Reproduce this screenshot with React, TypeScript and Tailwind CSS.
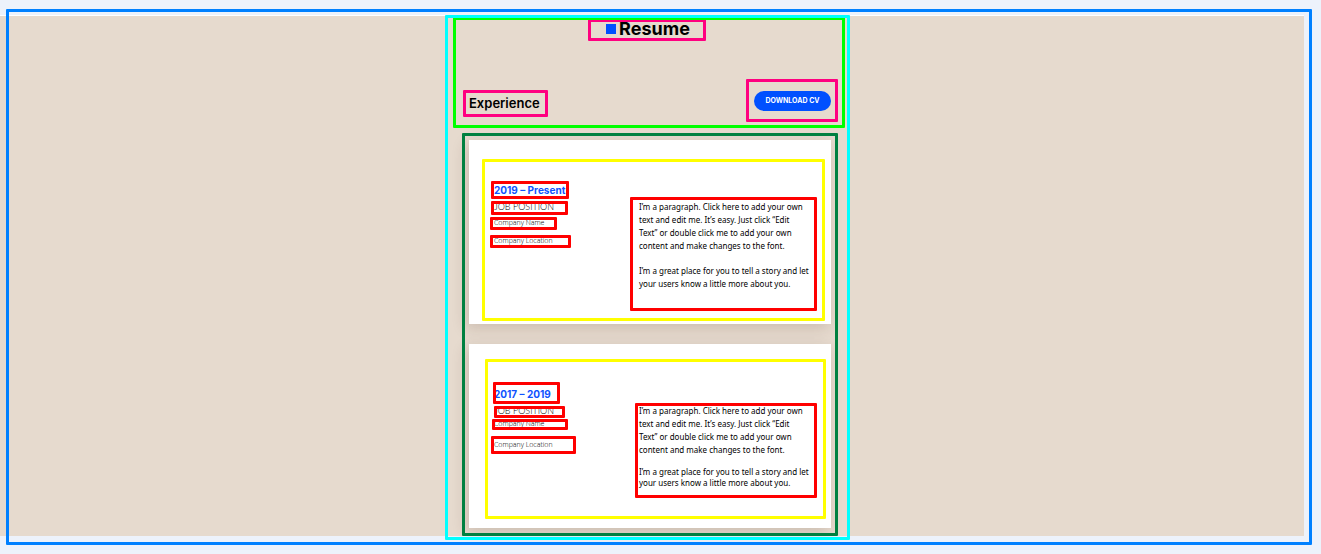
import type { ReactNode } from "react";

type FrameProps = { className: string };

/** Coloured outline laid over the element it marks. */
function Frame({ className }: FrameProps) {
  return (
    <span
      aria-hidden="true"
      className={`pointer-events-none absolute z-10 rounded-[1px] border-[3px] ${className}`}
    />
  );
}

type Job = {
  period: string;
  frames: {
    card: string;
    period: string;
    position: string;
    company: string;
    location: string;
    text: string;
  };
  companyClass: string;
  locationClass: string;
  closingClass: string;
};

const jobs: Job[] = [
  {
    period: "2019 – Present",
    frames: {
      card: "top-[19px] right-[6px] bottom-[3px] left-[13px]",
      period: "-top-px -right-1 -bottom-px -left-[3px]",
      position: "top-0 -right-[14px] -bottom-[2px] -left-[3px]",
      company: "top-0 -right-[13px] -bottom-px -left-1",
      location: "top-0 -right-[18px] -bottom-px -left-1",
      text: "-top-[3px] -right-[11px] -bottom-[21px] -left-[9px]",
    },
    companyClass: "mt-1",
    locationClass: "mt-[6px]",
    closingClass: "mt-3 leading-[13px]",
  },
  {
    period: "2017 – 2019",
    frames: {
      card: "top-[15px] right-[5px] bottom-[9px] left-[16px]",
      period: "-top-[4px] -right-[9px] -bottom-[2px] -left-px",
      position: "top-px -right-[11px] -bottom-px left-0",
      company: "top-px -right-[24px] bottom-0 -left-[2px]",
      location: "-top-[3px] -right-[23px] -bottom-[3px] -left-[3px]",
      text: "-top-px -right-[11px] -bottom-[10px] -left-1",
    },
    companyClass: "mt-px",
    locationClass: "mt-[9px]",
    closingClass: "mt-[10px] leading-[11px]",
  },
];

function Marked({ frame, className = "", children }: { frame: string; className?: string; children: ReactNode }) {
  return (
    <div className={`relative w-fit whitespace-nowrap ${className}`}>
      {children}
      <Frame className={`border-[#ff0000] ${frame}`} />
    </div>
  );
}

function JobCard({ job }: { job: Job }) {
  return (
    <article className="relative grid min-h-[184px] grid-cols-[145px_minmax(0,1fr)] bg-white pt-[42px] pr-[25px] pb-[34px] pl-[25px] shadow-[-3px_4px_14px_rgba(60,30,10,0.16)]">
      <div>
        <Marked frame={job.frames.period}>
          <h3 className="font-[Inter] text-[10px] leading-4 font-bold text-[#0f52ff]">{job.period}</h3>
        </Marked>
        <Marked frame={job.frames.position} className="mt-[3px]">
          <p className="text-[9px] leading-3">JOB POSITION</p>
        </Marked>
        <Marked frame={job.frames.company} className={job.companyClass}>
          <p className="font-['Open_Sans'] text-[7px] leading-3">Company Name</p>
        </Marked>
        <Marked frame={job.frames.location} className={job.locationClass}>
          <p className="font-['Open_Sans'] text-[7px] leading-3">Company Location</p>
        </Marked>
      </div>
      <div className="relative mt-[18px] self-start font-['Noto_Sans'] text-[8px] font-normal whitespace-nowrap">
        <p className="leading-[13px]">
          I’m a paragraph. Click here to add your own
          <br />
          text and edit me. It’s easy. Just click “Edit
          <br />
          Text” or double click me to add your own
          <br />
          content and make changes to the font.
        </p>
        <p className={job.closingClass}>
          I’m a great place for you to tell a story and let
          <br />
          your users know a little more about you.
        </p>
        <Frame className={`border-[#ff0000] ${job.frames.text}`} />
      </div>
      <Frame className={`border-[#ffff00] ${job.frames.card}`} />
    </article>
  );
}

export default function App() {
  return (
    <div className="relative min-h-screen bg-[#edf2fb] pt-[15px] pb-[18px] font-[Lato,sans-serif] font-light text-black">
      <main className="mr-[17px] border-t border-white bg-[#e6dace] pr-1">
        <div className="relative mx-auto max-w-[362px] pb-2">
          <header className="relative pt-1 pb-[29px] font-[Inter] font-semibold">
            <div className="relative mx-auto flex w-fit items-center gap-[3px] pr-1">
              <span className="size-[10px] bg-[#0050ff]" />
              <h1 className="text-[18px] leading-[18px] font-bold">Resume</h1>
              <Frame className="-top-px -right-3 -bottom-[3px] -left-[18px] border-[#ff0080]" />
            </div>
            <div className="mt-[53px] flex items-center justify-between">
              <div className="relative">
                <h2 className="pt-1 text-[13px] leading-4">Experience</h2>
                <Frame className="-top-[1px] -right-2 -bottom-[6px] -left-[6px] border-[#ff0080]" />
              </div>
              <div className="relative flex">
                <button
                  type="button"
                  className="h-5 w-[77px] rounded-full bg-[#0050ff] text-[7px] font-bold whitespace-nowrap text-white"
                >
                  DOWNLOAD CV
                </button>
                <Frame className="-top-3 -right-[7px] -bottom-[11px] -left-2 border-[#ff0080]" />
              </div>
            </div>
            <Frame className="top-px -right-[14px] bottom-3 -left-4 border-[#00ff00]" />
          </header>
          <section aria-label="Experience" className="relative flex flex-col gap-5">
            {jobs.map((job) => (
              <JobCard key={job.period} job={job} />
            ))}
            <Frame className="-top-[7px] -right-[7px] -bottom-2 -left-[7px] border-[#008040]" />
          </section>
          <Frame className="-top-px -right-[19px] -bottom-1 -left-6 border-[#00ffff]" />
        </div>
      </main>
      <Frame className="top-[9px] right-[9px] bottom-[9px] left-[6px] border-[#0080ff]" />
    </div>
  );
}
